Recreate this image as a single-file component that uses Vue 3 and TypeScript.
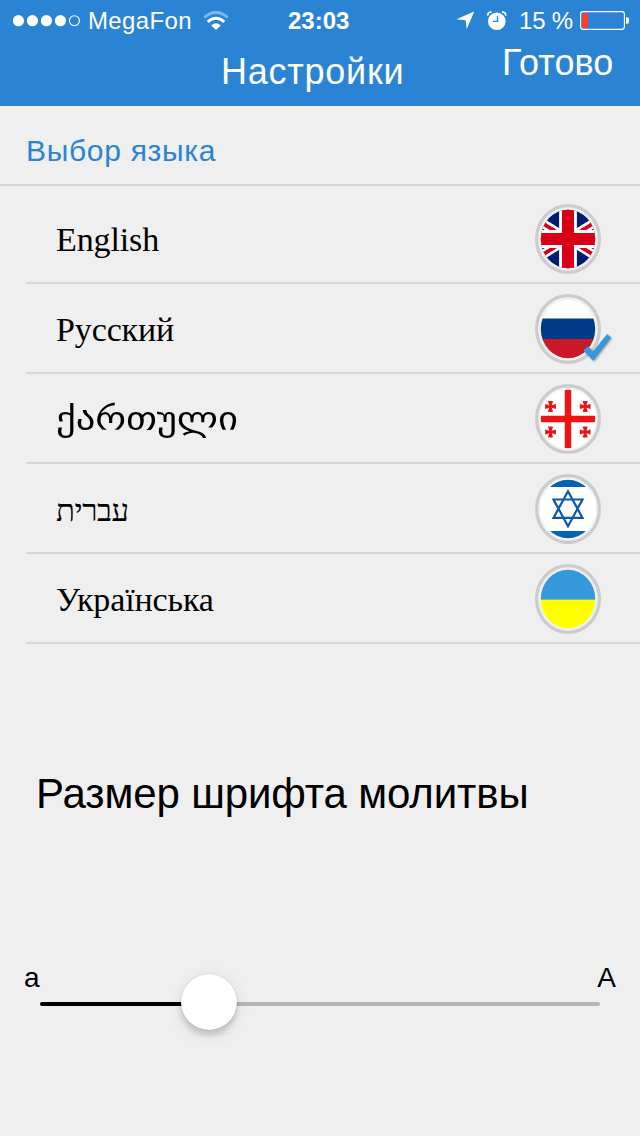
<script setup lang="ts">
import { ref } from 'vue'

type Code = 'en' | 'ru' | 'ka' | 'he' | 'uk'

interface Language {
  code: Code
  label: string
}

const languages: Language[] = [
  { code: 'en', label: 'English' },
  { code: 'ru', label: 'Русский' },
  { code: 'ka', label: 'ქართული' },
  { code: 'he', label: 'עברית' },
  { code: 'uk', label: 'Українська' },
]

const selected = ref<Code>('ru')
const fontScale = ref(30.2)
const smallCrosses = [
  [15.5, 22.5],
  [50.2, 22.5],
  [15.5, 48],
  [50.2, 48],
]
</script>

<template>
  <main class="screen">
    <header class="header">
      <div class="status">
        <svg class="signal" width="68" height="12" viewBox="0 0 68 12">
          <circle v-for="n in 4" :key="n" :cx="n * 14 - 8.6" cy="5.7" r="5.6" fill="#fff" />
          <circle cx="61.4" cy="5.7" r="5" fill="none" stroke="#fff" stroke-width="1.1" />
        </svg>
        <span class="carrier">MegaFon</span>
        <svg class="wifi" width="26" height="20" viewBox="0 0 26 20">
          <path d="M1.3 6.4Q13-3.6 24.7 6.4" fill="none" stroke="#fff" stroke-opacity=".4" stroke-width="2.9" />
          <path d="M4.8 10.8Q13 3.6 21.2 10.8" fill="none" stroke="#fff" stroke-width="2.9" />
          <path d="M8.2 14.6Q13 10 17.8 14.6L13 19Z" fill="#fff" />
        </svg>
        <span class="time">23:03</span>
        <svg class="location" width="19" height="19" viewBox="0 0 19 19">
          <path d="M18.2.4 10.7 18.2 9.6 9.3.5 8.2Z" fill="#fff" />
        </svg>
        <svg class="alarm" width="20" height="20" viewBox="0 0 20 20">
          <circle cx="9.8" cy="10.2" r="8.8" fill="#fff" />
          <path d="M.9 4.6Q.6 1.2 4.6.9M18.7 4.6Q19 1.2 15 .9" fill="none" stroke="#fff" stroke-width="1.7" />
          <path d="M10.5 4.8v5.6H6" fill="none" stroke="#2b84d3" stroke-width="1.4" />
        </svg>
        <span class="percent">15 %</span>
        <svg class="battery" width="50" height="20" viewBox="0 0 50 20">
          <rect x=".6" y=".6" width="43.8" height="17.8" rx="2.6" fill="none" stroke="#fff" stroke-width="1.1" />
          <rect x="2" y="2" width="6" height="15" rx=".8" fill="#ff3b30" />
          <path d="M46 6.3h1.2q1.8 0 1.8 1.8v2.8q0 1.8-1.8 1.8H46Z" fill="#fff" />
        </svg>
      </div>
      <div class="navbar">
        <h1 class="title">Настройки</h1>
        <button class="done" type="button">Готово</button>
      </div>
    </header>

    <h2 class="section">Выбор языка</h2>

    <ul class="list">
      <li v-for="lang in languages" :key="lang.code" class="row" @click="selected = lang.code">
        <span class="label" :class="lang.code">{{ lang.label }}</span>
        <svg class="flag" width="80" height="70" viewBox="0 0 80 70">
          <defs>
            <clipPath :id="'disc-' + lang.code">
              <ellipse cx="33" cy="35" rx="27.2" ry="29.2" />
            </clipPath>
          </defs>
          <ellipse cx="33" cy="35" rx="31.4" ry="33.4" fill="#f0f0f0" stroke="#ccc" stroke-width="3.2" />
          <ellipse v-if="lang.code === 'ka' || lang.code === 'he'" cx="33" cy="35" rx="28.5" ry="30.5" fill="#f8f8f8" />
          <g :clip-path="`url(#disc-${lang.code})`">
            <template v-if="lang.code === 'en'">
              <rect width="66" height="70" fill="#001b6f" />
              <path d="M-9 9 75 61M75 9-9 61" stroke="#fff" stroke-width="9" />
              <path d="M-9 9 75 61M75 9-9 61" stroke="#d80016" stroke-width="3.8" />
              <path d="M33 0V70M0 35H66" stroke="#fff" stroke-width="17.8" />
              <path d="M33 0V70M0 35H66" stroke="#d80016" stroke-width="12" />
            </template>
            <template v-else-if="lang.code === 'ru'">
              <rect width="66" height="25" fill="#fff" />
              <rect y="24.5" width="66" height="21" fill="#003b87" />
              <rect y="45" width="66" height="25" fill="#cb1829" />
            </template>
            <template v-else-if="lang.code === 'ka'">
              <rect width="66" height="70" fill="#fff" />
              <path d="M33 0V70" stroke="#f01212" stroke-width="6.4" />
              <path d="M0 35H66" stroke="#f01212" stroke-width="6.6" />
              <path
                v-for="([x, y], i) in smallCrosses"
                :key="i"
                :transform="`translate(${x} ${y})`"
                d="M-2.5-5.6H2.5L1.3-1.3 5.4-2.5V2.5L1.3 1.3 2.5 5.6H-2.5L-1.3 1.3-5.4 2.5V-2.5L-1.3-1.3Z"
                fill="#f01212"
              />
            </template>
            <template v-else-if="lang.code === 'he'">
              <rect width="66" height="70" fill="#fff" />
              <rect width="66" height="13" fill="#0663b4" />
              <rect y="57" width="66" height="13" fill="#0663b4" />
              <path d="M33 17.2 47.5 43.9H18.5ZM33 52.2 18.5 25.5H47.5Z" fill="none" stroke="#0a58a8" stroke-width="2.2" />
            </template>
            <template v-else>
              <rect width="66" height="36" fill="#3498db" />
              <rect y="35.6" width="66" height="35" fill="#ff0" />
            </template>
          </g>
          <path
            v-if="lang.code === selected"
            class="check"
            d="M48.3 56.4 53 52.2 58 57.4 72.2 40 76 43.7 58.3 66.7Z"
            fill="#3498db"
          />
        </svg>
      </li>
    </ul>

    <h2 class="size-title">Размер шрифта молитвы</h2>

    <section class="size">
      <div class="letters"><span>a</span><span class="big">A</span></div>
      <div class="track">
        <div class="filled" :style="{ width: fontScale + '%' }"></div>
        <div class="thumb" :style="{ left: fontScale + '%' }"></div>
      </div>
    </section>
  </main>
</template>

<style>
body {
  margin: 0;
  background: #efefef;
}
</style>

<style scoped>
.screen {
  width: 640px;
  height: 1136px;
  overflow: hidden;
  background: #efefef;
  color: #000;
  font-family: "Liberation Sans", Arial, sans-serif;
}
h1,
h2,
ul {
  margin: 0;
  padding: 0;
  font-weight: 400;
}
svg {
  display: block;
  flex: none;
}
.header {
  height: 106px;
  background: #2b84d3;
  color: #fff;
}
.status {
  display: flex;
  align-items: center;
  height: 41px;
  font-size: 24px;
  white-space: nowrap;
}
.signal {
  margin-left: 13px;
}
.carrier {
  width: 115px;
  margin-left: 7px;
  letter-spacing: 0.35px;
}
.wifi {
  margin-right: 59px;
}
.time {
  width: 168px;
  font-weight: 700;
}
.alarm {
  margin-left: 12px;
}
.percent {
  width: 61px;
  margin-left: 12px;
  letter-spacing: -0.2px;
}
.navbar {
  display: grid;
  grid-template-columns: 221px 281px auto;
  align-items: start;
}
.title {
  grid-column: 2;
  margin-top: 10px;
  font-size: 36px;
  line-height: 41px;
  letter-spacing: 0.75px;
}
.done {
  justify-self: start;
  margin-top: 1px;
  padding: 0;
  border: 0;
  background: none;
  color: inherit;
  font: 36px/41px "Liberation Sans", Arial, sans-serif;
}
.section {
  height: 78px;
  padding-left: 26px;
  border-bottom: 2px solid #d7d7d7;
  color: #2b84d3;
  font-size: 30px;
  line-height: 89px;
  letter-spacing: 0.7px;
}
.list {
  list-style: none;
}
.row {
  display: flex;
  align-items: center;
  justify-content: space-between;
  box-sizing: border-box;
  height: 90px;
  margin-left: 26px;
  padding: 2px 25px 0 30px;
  border-bottom: 2px solid #d7d7d7;
}
.row:first-child {
  height: 98px;
  padding-top: 10px;
}
.label {
  padding-top: 1px;
  font-family: "Liberation Serif", "Times New Roman", serif;
  font-size: 34px;
  line-height: 41px;
  letter-spacing: -0.12px;
}
.label.ka {
  font-family: "DejaVu Sans", sans-serif;
  font-size: 32px;
  transform: scaleX(1.21);
  transform-origin: left;
}
.label.he {
  padding-top: 2px;
  font-size: 31px;
  letter-spacing: -0.4px;
}
.check {
  filter: drop-shadow(1px 1px 1px rgba(0, 0, 0, 0.35));
}
.size-title {
  margin-top: 124px;
  padding-left: 36px;
  font-size: 42px;
  line-height: 52px;
  letter-spacing: -0.12px;
  white-space: nowrap;
}
.size {
  padding: 142px 40px 0;
}
.letters {
  display: flex;
  justify-content: space-between;
  margin: 0 -16px;
  font-size: 28px;
  line-height: 32px;
}
.track {
  position: relative;
  height: 4px;
  margin-top: 8px;
  border-radius: 2px;
  background: #b6b6b6;
}
.filled {
  height: 4px;
  border-radius: 2px;
  background: #000;
}
.thumb {
  position: absolute;
  top: -28px;
  width: 56px;
  height: 56px;
  margin-left: -28px;
  border-radius: 50%;
  background: #fff;
  box-shadow: 0 0 1px rgba(0, 0, 0, 0.3), 0 6px 5px rgba(0, 0, 0, 0.13), 0 4px 16px rgba(0, 0, 0, 0.09);
}
</style>
